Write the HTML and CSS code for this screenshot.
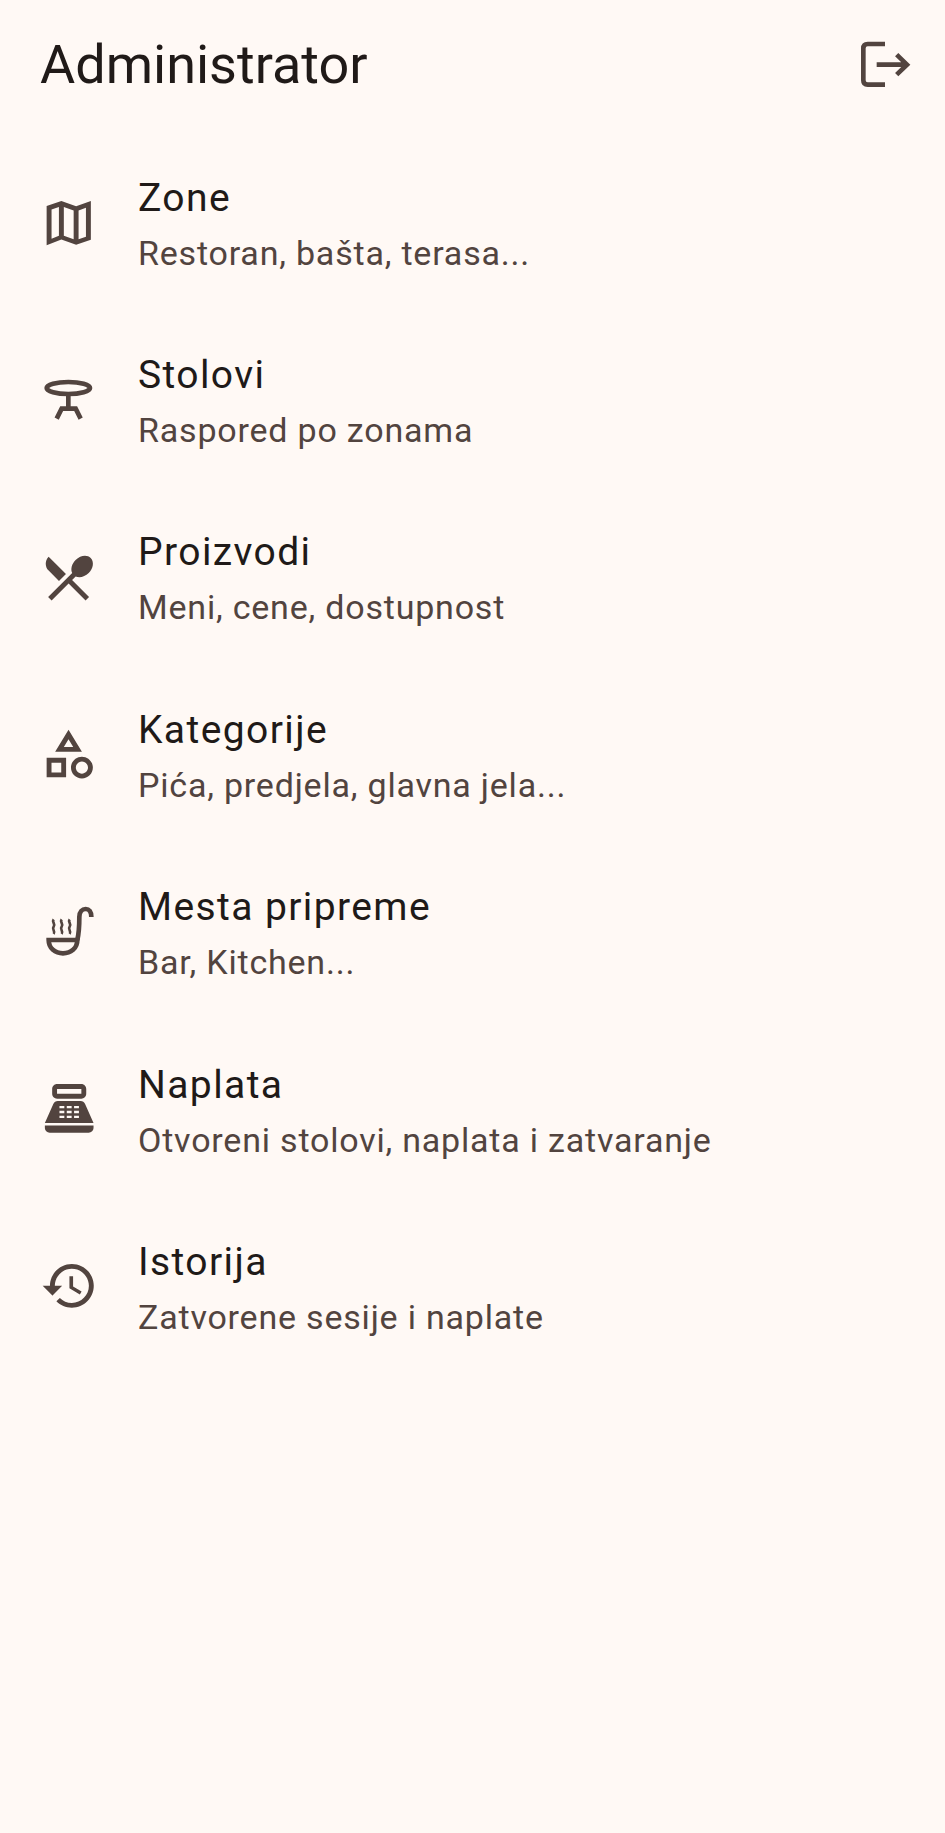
FILE: index.html
```html
<!DOCTYPE html>
<html lang="sr">

<head>
    <meta charset="UTF-8">
    <meta name="viewport" content="width=device-width, initial-scale=1.0">
    <title>Administrator</title>
    <link rel="stylesheet" href="styles.css">
</head>

<body>
    <header class="topBar">
        <h1 class="topTitle">Administrator</h1>
        <svg class="icon" viewBox="0 0 240 240">
            <path class="line" d="M120 60H68q-13 0-13 13V169q0 13 13 13H120"/>
            <path class="line" d="M95 122H183M155 92L186 122L155 152"/>
        </svg>
    </header>

    <ul class="menu">
        <li class="menuItem">
            <svg class="icon" viewBox="0 -21 240 240">
                <path transform="translate(27.8 11) scale(7.37)" fill-rule="evenodd" d="M21 3l-6 2.1L9 3 3 5.02V21l6-2.33 6 2.1 6-2.02V3zM10 5.47l4 1.4v11.66l-4-1.4V5.47zm-5 .99l3-1.01v11.7l-3 1.16V6.46zm14 11.08l-3 1.01V6.86l3-1.16v11.84z"/>
            </svg>
            <div class="itemText">
                <div class="itemTitle">Zone</div>
                <div class="itemSub">Restoran, bašta, terasa...</div>
            </div>
        </li>
        <li class="menuItem">
            <svg class="icon" viewBox="0 -14 240 240">
                <ellipse class="line" cx="115" cy="70" rx="65" ry="18"/>
                <path class="line" d="M115 88V132M80 162L95 132H137L152 162"/>
            </svg>
            <div class="itemText">
                <div class="itemTitle">Stolovi</div>
                <div class="itemSub">Raspored po zonama</div>
            </div>
        </li>
        <li class="menuItem">
            <svg class="icon" viewBox="0 -7 240 240">
                <path transform="translate(27 26) scale(7.4)" d="M8.1 13.34l2.83-2.83L3.91 3.5c-1.56 1.56-1.56 4.09 0 5.66l4.19 4.18zm6.78-1.81c1.53.71 3.68.21 5.27-1.38 1.91-1.91 2.28-4.65.81-6.12-1.46-1.46-4.2-1.1-6.12.81-1.59 1.59-2.09 3.74-1.38 5.27L3.7 19.87l1.41 1.41L12 14.41l6.88 6.88 1.41-1.41L13.41 13l1.47-1.47z"/>
            </svg>
            <div class="itemText">
                <div class="itemTitle">Proizvodi</div>
                <div class="itemSub">Meni, cene, dostupnost</div>
            </div>
        </li>
        <li class="menuItem">
            <svg class="icon" viewBox="0 0 240 240">
                <path transform="translate(28 30) scale(7.3)" fill-rule="evenodd" d="M12 2l-5.5 9h11L12 2zm0 3.84L13.93 9h-3.87L12 5.84zM17.5 13c-2.49 0-4.5 2.01-4.5 4.5s2.01 4.5 4.5 4.5 4.5-2.01 4.5-4.5-2.01-4.5-4.5-4.5zm0 7c-1.38 0-2.5-1.12-2.5-2.5s1.12-2.5 2.5-2.5 2.5 1.12 2.5 2.5-1.12 2.5-2.5 2.5zM3 21.5h8v-8H3v8zm2-6h4v4H5v-4z"/>
            </svg>
            <div class="itemText">
                <div class="itemTitle">Kategorije</div>
                <div class="itemSub">Pića, predjela, glavna jela...</div>
            </div>
        </li>
        <li class="menuItem">
            <svg class="icon" viewBox="0 -7 240 240">
                <path class="line" d="M56 137H142C142 162 122 177 99 177C76 177 56 162 56 137Z"/>
                <path class="line" d="M142 137C147 115 148 90 148 68C148 52 157 44 167 44C177 44 184 52 184 68"/>
                <path class="thin" d="M71 75c-7 9 7 13 0 22c-7 9 7 13 0 22M95 75c-7 9 7 13 0 22c-7 9 7 13 0 22M119 75c-7 9 7 13 0 22c-7 9 7 13 0 22"/>
            </svg>
            <div class="itemText">
                <div class="itemTitle">Mesta pripreme</div>
                <div class="itemSub">Bar, Kitchen...</div>
            </div>
        </li>
        <li class="menuItem">
            <svg class="icon" viewBox="0 0 240 240">
                <path transform="translate(30 27.5) scale(7.3)" fill-rule="evenodd" d="M17 2H7c-1.1 0-2 .9-2 2v2c0 1.1.9 2 2 2h10c1.1 0 2-.9 2-2V4c0-1.1-.9-2-2-2zm0 4H7V4h10v2zm3 16H4c-1.1 0-2-.9-2-2v-1h20v1c0 1.1-.9 2-2 2zm-1.47-11.81C18.21 9.47 17.49 9 16.7 9H7.3c-.79 0-1.51.47-1.83 1.19L2 18h20l-3.47-7.81zM8 11h2v1H8zM11 11h2v1h-2zM14 11h2v1h-2zM8 13h2v1H8zM11 13h2v1h-2zM14 13h2v1h-2zM8 15h2v1H8zM11 15h2v1h-2zM14 15h2v1h-2z"/>
            </svg>
            <div class="itemText">
                <div class="itemTitle">Naplata</div>
                <div class="itemSub">Otvoreni stolovi, naplata i zatvaranje</div>
            </div>
        </li>
        <li class="menuItem">
            <svg class="icon" viewBox="0 7 240 240">
                <path transform="translate(30.7 36) scale(7.3)" d="M13 3c-4.97 0-9 4.03-9 9H1l3.89 3.89.07.14L9 12H6c0-3.87 3.13-7 7-7s7 3.13 7 7-3.13 7-7 7c-1.93 0-3.68-.79-4.94-2.06l-1.42 1.42C8.27 19.99 10.51 21 13 21c4.97 0 9-4.03 9-9s-4.03-9-9-9zm-1 5v5l4.28 2.54.72-1.21-3.5-2.08V8H12z"/>
            </svg>
            <div class="itemText">
                <div class="itemTitle">Istorija</div>
                <div class="itemSub">Zatvorene sesije i naplate</div>
            </div>
        </li>
    </ul>
</body>

</html>
```

FILE: styles.css
```css
body {
    margin: 0;
    min-height: 1833px;
    background-color: rgb(255, 249, 245);
    font-family: Roboto, sans-serif;
}

.topBar {
    display: flex;
    justify-content: space-between;
    align-items: center;
    height: 128px;
    padding-left: 40px;
    padding-right: 20px;
}

.topTitle {
    margin: 0;
    font-size: 54px;
    font-weight: 400;
    color: rgb(32, 26, 24);
}

.icon {
    flex: none;
    width: 80px;
    height: 80px;
    fill: rgb(82, 68, 63);
}

.line {
    fill: none;
    stroke: rgb(82, 68, 63);
    stroke-width: 14;
}

.thin {
    fill: none;
    stroke: rgb(82, 68, 63);
    stroke-width: 8;
}

.menu {
    list-style: none;
    margin: 0;
    padding: 6px 0 0 0;
}

.menuItem {
    display: flex;
    align-items: center;
    height: 177.4px;
    padding-left: 30px;
    box-sizing: border-box;
}

.itemText {
    margin-left: 28px;
}

.itemTitle {
    font-size: 39px;
    line-height: 56px;
    letter-spacing: 1.4px;
    color: rgb(32, 26, 24);
}

.itemSub {
    margin-top: 4px;
    font-size: 34px;
    line-height: 46px;
    letter-spacing: 0.8px;
    color: rgb(82, 68, 63);
}
```
